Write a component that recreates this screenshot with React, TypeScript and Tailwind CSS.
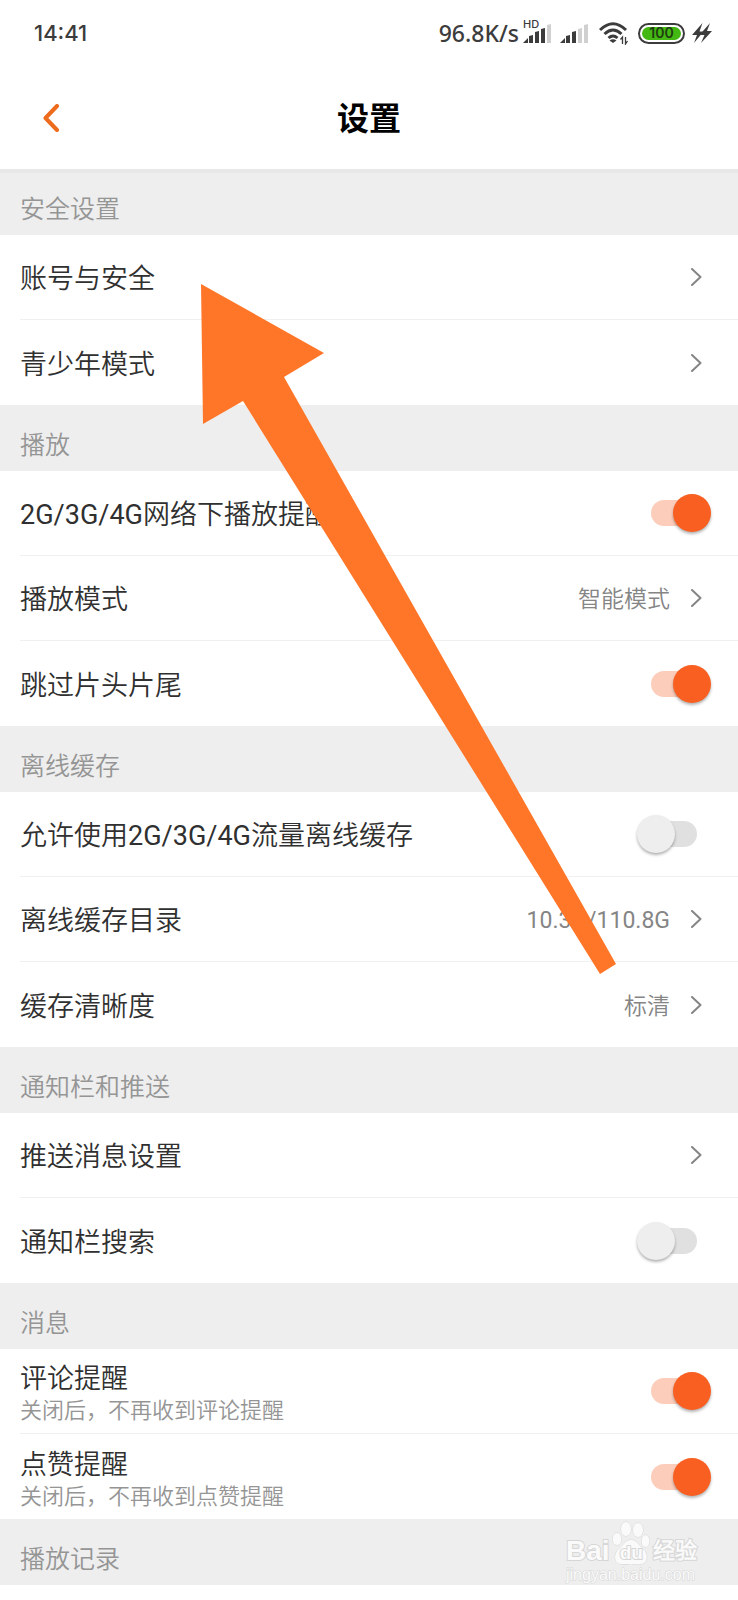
import React, { useState } from "react";

type Item = {
  label: string;
  hint?: string;
  value?: string;
  toggle?: boolean;
  on?: boolean;
};

type Section = {
  title: string;
  items: Item[];
};

const sections: Section[] = [
  {
    title: "安全设置",
    items: [{ label: "账号与安全" }, { label: "青少年模式" }],
  },
  {
    title: "播放",
    items: [
      { label: "2G/3G/4G网络下播放提醒", toggle: true, on: true },
      { label: "播放模式", value: "智能模式" },
      { label: "跳过片头片尾", toggle: true, on: true },
    ],
  },
  {
    title: "离线缓存",
    items: [
      { label: "允许使用2G/3G/4G流量离线缓存", toggle: true, on: false },
      { label: "离线缓存目录", value: "10.3G/110.8G" },
      { label: "缓存清晰度", value: "标清" },
    ],
  },
  {
    title: "通知栏和推送",
    items: [
      { label: "推送消息设置" },
      { label: "通知栏搜索", toggle: true, on: false },
    ],
  },
  {
    title: "消息",
    items: [
      {
        label: "评论提醒",
        hint: "关闭后，不再收到评论提醒",
        toggle: true,
        on: true,
      },
      {
        label: "点赞提醒",
        hint: "关闭后，不再收到点赞提醒",
        toggle: true,
        on: true,
      },
    ],
  },
  { title: "播放记录", items: [] },
];

const Signal = ({ bars }: { bars: number }) => {
  const heights = [5, 8, 12, 15, 19];
  return (
    <svg width="28" height="20" viewBox="0 0 28 20">
      {heights.map((h, i) => (
        <path
          key={h}
          d={
            i === 0
              ? "M0 20L5 15V20Z"
              : `M${i * 6} ${21 - h}L${i * 6 + 4} ${20 - h}V20H${i * 6}Z`
          }
          fill={i < bars ? "#3c3c3c" : "#d0d0d0"}
        />
      ))}
    </svg>
  );
};

const StatusBar = () => {
  return (
    <div className="flex h-[66px] items-center justify-between pr-[26px] pl-[34px] text-[#3c3c3c]">
      <span className="font-['Inter',sans-serif] text-[22px] font-medium">
        14:41
      </span>
      <div className="flex items-center">
        <span className="mr-1 font-['Noto_Sans',sans-serif] text-[23px] font-medium">
          96.8K/s
        </span>
        <div className="relative mr-[9px]">
          <Signal bars={4} />
          <span className="absolute -top-1 left-0 bg-white font-['Inter',sans-serif] text-[11px] leading-[11px] font-medium">
            HD
          </span>
        </div>
        <Signal bars={3} />
        <svg
          className="ml-[11px]"
          width="30"
          height="24"
          viewBox="0 0 30 24"
          fill="none"
          stroke="#3c3c3c"
          strokeWidth="3"
        >
          <path d="M1 9Q14 -3.500 27 9" />
          <path d="M5.500 13Q14 5 22.500 13" />
          <path d="M9.500 17Q14 13 18.500 17" />
          <path d="M14 22L10.500 19.500Q14 17 17.500 19.500Z" fill="#3c3c3c" stroke="none" />
          <path d="M23.500 23V16L21.500 18.500M26.500 16V23L28.500 20" strokeWidth="1.300" />
        </svg>
        <div className="ml-[9px] flex h-[21px] w-[47px] rounded-full border-2 border-[#3c3c3c] p-0.5">
          <span className="flex flex-1 items-center justify-center rounded-full bg-[#43b813] font-['Inter',sans-serif] text-[14px] leading-none font-semibold text-[#1f3d12]">
            100
          </span>
        </div>
        <svg
          className="ml-[7px]"
          width="20"
          height="20"
          viewBox="0 0 20 20"
          fill="#3c3c3c"
        >
          <path d="M10.500 0L0 12H5L2 20L11.500 8.500H7.500Z" />
          <path d="M18 0L7.500 12H12.500L9 20L20 8H15Z" />
        </svg>
      </div>
    </div>
  );
};

const NavBar = () => {
  return (
    <header className="grid h-[103px] grid-cols-[1fr_auto_1fr] items-center">
      <button aria-label="返回" className="ml-[42px] w-5">
        <svg
          width="18"
          height="28"
          viewBox="0 0 18 28"
          fill="none"
          stroke="#ed6b1c"
          strokeWidth="4"
          strokeLinecap="round"
          strokeLinejoin="round"
        >
          <path d="M15 2L3.500 14L15 26" />
        </svg>
      </button>
      <h1 className="pt-0.5 text-[32px] leading-10 font-bold text-black">
        设置
      </h1>
    </header>
  );
};

const Chevron = () => {
  return (
    <svg
      width="11"
      height="18"
      viewBox="0 0 11 18"
      fill="none"
      stroke="#858585"
      strokeWidth="2"
      strokeLinecap="round"
      strokeLinejoin="round"
    >
      <path d="M1 1L9.500 9L1 17" />
    </svg>
  );
};

const Row = ({ item }: { item: Item }) => {
  const [checked, setChecked] = useState(!!item.on);

  if (item.toggle) {
    return (
      <label className="flex h-[85px] w-full items-center justify-between pr-[41px]">
        <span className={`flex flex-col ${item.hint ? "pt-2" : "pt-1"}`}>
          <span className="text-[27px] leading-8 text-[#303030]">
            {item.label}
          </span>
          {item.hint && (
            <span className="text-[22px] leading-8 text-[#959595]">
              {item.hint}
            </span>
          )}
        </span>
        <input
          type="checkbox"
          checked={checked}
          onChange={() => setChecked(!checked)}
          className="relative h-[26px] w-[46px] appearance-none rounded-full bg-[#e0e0e0] before:absolute before:-top-1.5 before:-left-3.5 before:size-[38px] before:rounded-full before:bg-[#eeeeee] before:shadow-[0_2px_3px_rgba(0,0,0,0.3)] checked:bg-[#fdcdbb] checked:before:left-[22px] checked:before:bg-[#f95f20]"
        />
      </label>
    );
  }

  return (
    <button className="flex h-[85px] w-full items-center justify-between pr-9 text-left">
      <span className="pt-1 text-[27px] leading-8 text-[#303030]">
        {item.label}
      </span>
      <span className="flex items-center gap-[21px] text-[23px] leading-8 text-[#858585]">
        <span className="pt-1">{item.value}</span>
        <Chevron />
      </span>
    </button>
  );
};

const Watermark = () => {
  return (
    <div className="absolute right-[41px] bottom-0 flex w-[131px] flex-col text-[#fafafa] [-webkit-text-stroke:2px_#d6d6d6] [paint-order:stroke]">
      <div className="flex items-end justify-between">
        <span className="font-['Liberation_Sans',sans-serif] text-[28px] leading-7 font-bold">
          Bai
        </span>
        <div className="relative flex h-[44px] w-[38px] items-end justify-center">
          <svg
            className="absolute inset-0"
            width="38"
            height="44"
            viewBox="0 0 38 44"
            fill="#fafafa"
            stroke="#d6d6d6"
          >
            <ellipse cx="5" cy="18" rx="4.500" ry="6" />
            <ellipse cx="14" cy="8" rx="5" ry="7" />
            <ellipse cx="26" cy="9" rx="5" ry="7" />
            <ellipse cx="33.500" cy="20" rx="4" ry="6" />
            <path d="M19 19C13 19 11 25 7 28C2 32 1 42 9 43C13 43.500 25 43.500 29 43C37 42 36 32 31 28C27 25 25 19 19 19Z" />
          </svg>
          <span className="relative font-['Liberation_Sans',sans-serif] text-[19px] leading-6 font-bold">
            du
          </span>
        </div>
        <span className="text-[22px] leading-7 font-bold">经验</span>
      </div>
      <span className="font-['Liberation_Sans',sans-serif] text-[16px] leading-5 [-webkit-text-stroke:1px_#d6d6d6]">
        jingyan.baidu.com
      </span>
    </div>
  );
};

const App = () => {
  return (
    <div className="relative min-h-screen overflow-hidden bg-white font-['Roboto','Noto_Sans_CJK_SC',sans-serif]">
      <StatusBar />
      <NavBar />
      <main className="relative font-['Roboto','Noto_Sans_CJK_SC_DemiLight','Noto_Sans_CJK_SC',sans-serif]">
        {sections.map((section, i) => (
          <section key={section.title}>
            <h2
              className={`flex h-[66px] items-center bg-[#eeeeee] pt-4 pl-5 text-[25px] leading-8 text-[#959595] ${
                i === 0 ? "shadow-[inset_0_4px_0_#e8e8e8]" : ""
              }`}
            >
              {section.title}
            </h2>
            <div className="divide-y divide-[#f0f0f0] pl-5">
              {section.items.map((item) => (
                <Row key={item.label} item={item} />
              ))}
            </div>
          </section>
        ))}
        <Watermark />
      </main>
      <svg
        className="pointer-events-none absolute top-[284px] left-[201px]"
        width="416"
        height="690"
        viewBox="0 0 416 690"
        fill="#ff7628"
      >
        <path d="M0 0L123 69L83 93L415 680L399 690L42 117L2 140Z" />
      </svg>
    </div>
  );
};

export default App;
